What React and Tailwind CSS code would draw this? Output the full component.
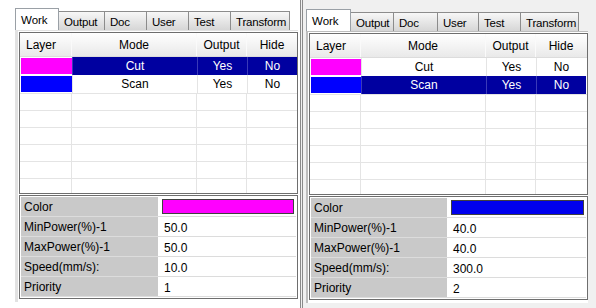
import React from 'react';

const TAB_NAMES = ['Work', 'Output', 'Doc', 'User', 'Test', 'Transform'];

function Tabs({ widths }) {
  return (
    <div className="flex items-end h-[22px] text-[11.5px] whitespace-nowrap">
      {TAB_NAMES.map((n, i) =>
        i === 0 ? (
          <div key={n} className={`${widths[i]} h-[22px] border-t border-l border-r border-[#9aa0a6] bg-white pl-[5px] pt-[3px]`}>
            {n}
          </div>
        ) : (
          <div key={n} className={`${widths[i]} h-[19px] overflow-hidden border-t border-r border-[#8c8c8c] bg-gradient-to-b from-[#f7f7f7] to-[#d6d6d6] pl-[5px] pt-[2px] tracking-[-0.2px]`}>
            {n}
          </div>
        )
      )}
    </div>
  );
}

function LayerTable({ selected, firstCol }) {
  const rows = [
    { color: 'bg-[#ff00ff]', mode: 'Cut' },
    { color: 'bg-[#0000ff]', mode: 'Scan' },
  ];
  return (
    <div className="h-[162px] border border-[#6e6e6e] bg-white overflow-hidden">
      <div className="flex h-[24px] bg-gradient-to-b from-white to-[#e9e9e9] border-b border-[#dcdcdc]">
        <div className={`${firstCol} flex items-center pl-[6px] border-r border-[#fafafa]`}>Layer</div>
        <div className="w-[125px] flex items-center justify-center border-r border-[#fafafa]">Mode</div>
        <div className="w-[50px] flex items-center justify-center border-r border-[#fafafa]">Output</div>
        <div className="w-[50px] flex items-center justify-center">Hide</div>
      </div>
      {rows.map((r, i) => {
        const cell = i === selected
          ? 'bg-[#0000a0] text-white border-l border-[#3a3ab8]'
          : 'border-l border-[#e4e4e4]';
        return (
          <div key={r.mode} className="flex h-[18px]">
            <div className={`${firstCol} py-[1px] pl-[1px]`}>
              <div className={`h-full ${r.color}`} />
            </div>
            <div className={`w-[125px] flex items-center justify-center ${cell}`}>{r.mode}</div>
            <div className={`w-[50px] flex items-center justify-center ${cell}`}>Yes</div>
            <div className={`w-[50px] flex items-center justify-center ${cell}`}>No</div>
          </div>
        );
      })}
      {[0, 1, 2, 3, 4, 5].map((i) => (
        <div key={i} className="flex h-[17px] border-t border-[#e4e4e4]">
          <div className={`${firstCol} border-r border-[#e4e4e4]`} />
          <div className="w-[125px] border-r border-[#e4e4e4]" />
          <div className="w-[50px] border-r border-[#e4e4e4]" />
          <div className="w-[50px]" />
        </div>
      ))}
    </div>
  );
}

function PropGrid({ swatch, values, labelW }) {
  const labels = ['MinPower(%)-1', 'MaxPower(%)-1', 'Speed(mm/s):', 'Priority'];
  return (
    <div className="mt-[1px] h-[104px] border border-[#6e6e6e] bg-white p-[1px]">
      <div className="flex h-[20px] border-b border-[#dcdcdc]">
        <div className={`${labelW} bg-[#c9c9c9] pl-[3px] flex items-center`}>Color</div>
        <div className="flex-1 pl-[4px] pr-[2px] py-[2px]">
          <div className={`h-full border border-[#404040] ${swatch}`} />
        </div>
      </div>
      {labels.map((l, i) => (
        <div key={l} className="flex h-[20px] border-b border-[#dcdcdc]">
          <div className={`${labelW} bg-[#c9c9c9] pl-[3px] flex items-center`}>{l}</div>
          <div className="flex-1 pl-[6px] flex items-center pt-[2px]">{values[i]}</div>
        </div>
      ))}
    </div>
  );
}

export default function App() {
  return (
    <div className="w-[596px] h-[308px] flex bg-white text-[12px] text-black overflow-hidden font-['Liberation_Sans',Arial,sans-serif]">
      {/* left window */}
      <div className="w-[300px] pl-[15px] pt-[8px] pr-[2px]">
        <Tabs widths={['w-[44px]', 'w-[46px]', 'w-[42px]', 'w-[42px]', 'w-[42px]', 'w-[59px]']} />
        <div className="border-l-[3px] border-t border-[#e2e2e2] pl-[1px] pt-[1px] pb-[3px]">
          <LayerTable selected={0} firstCol="w-[52px]" />
          <PropGrid swatch="bg-[#ff00ff]" values={['50.0', '50.0', '10.0', '1']} labelW="w-[137px]" />
        </div>
      </div>
      {/* right window */}
      <div className="flex-1 bg-[#f0f0f0] border-l-[3px] border-double border-[#8a8a8a] pl-[3px] pt-[9px] pr-[8px]">
        <Tabs widths={['w-[45px]', 'w-[43px]', 'w-[44px]', 'w-[41px]', 'w-[42px]', 'w-[58px]']} />
        <div className="border-l-[2px] border-t border-[#bdbdbd] pl-[1px] pt-[1px] pb-[3px] bg-white">
          <LayerTable selected={1} firstCol="w-[51px]" />
          <PropGrid swatch="bg-[#0000ee]" values={['40.0', '40.0', '300.0', '2']} labelW="w-[136px]" />
        </div>
      </div>
    </div>
  );
}
